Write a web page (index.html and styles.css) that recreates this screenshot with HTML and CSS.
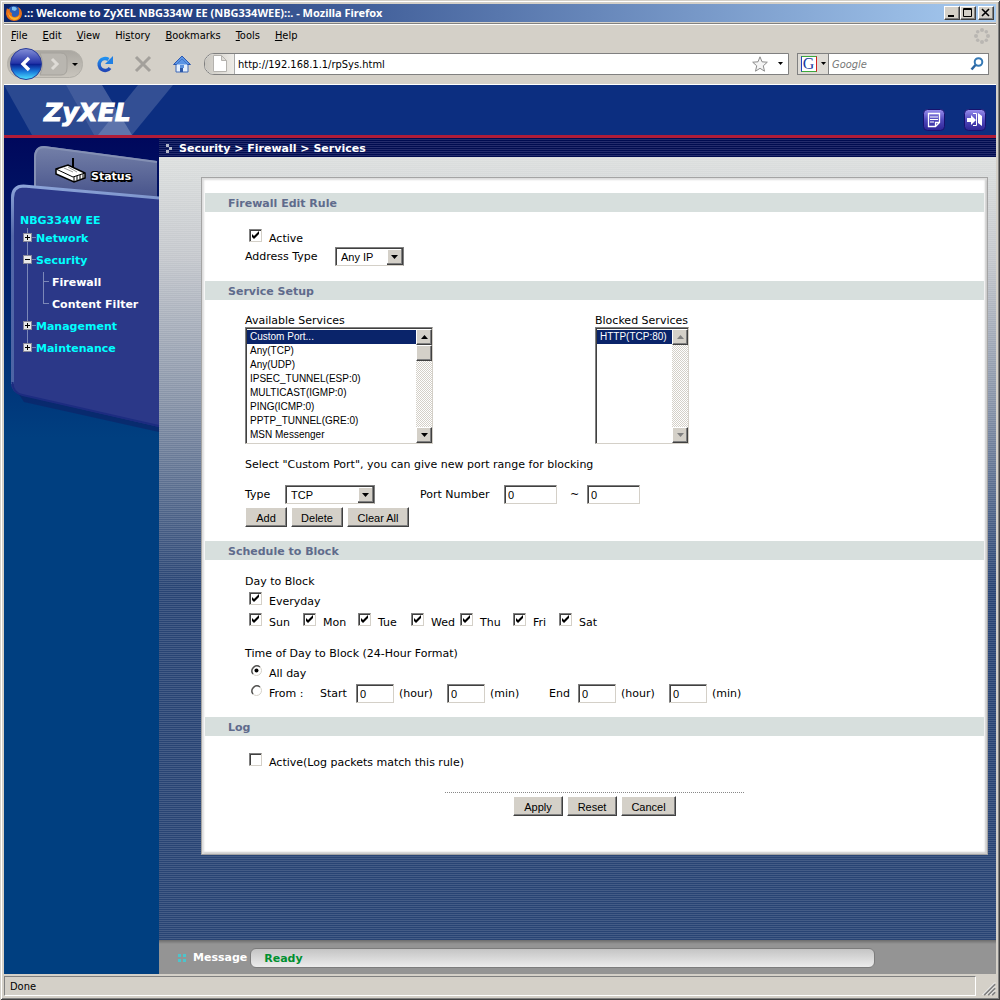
FILE: index.html
```
<!DOCTYPE html>
<html lang="en">
<head>
    <meta charset="UTF-8">
    <meta name="viewport" content="width=device-width, initial-scale=1.0">
    <title>.:: Welcome to ZyXEL NBG334W EE (NBG334WEE)::.</title>
    <link rel="stylesheet" href="styles.css">
</head>
<body>
    <div class="window">
        <div class="titlebar">
            <svg class="fox" width="17" height="17" viewBox="0 0 17 17">
                <circle cx="8" cy="8" r="7" fill="#2b5fb8"/>
                <path d="M6 2q4-1 5 2l-2 2-3-1z" fill="#7fc0ee"/>
                <path d="M1 3q1 2 3 1-1 3 2 4-1 3 2 4 4 0 5-3 1-4-1-7 4 2 4 7-1 7-8 7-7-1-8-7 0-3 1-6z" fill="#e8701a"/>
                <path d="M2 5q0 5 4 7 5 2 8-2-1 5-6 5-6-1-6-10z" fill="#f9b52c"/>
            </svg>
            <span class="title-text">.:: Welcome to ZyXEL NBG334W EE (NBG334WEE)::. - Mozilla Firefox</span>
            <button class="win-btn" aria-label="Minimize"><svg width="12" height="10" viewBox="0 0 12 10"><path d="M2 8h6" stroke="#000" stroke-width="2"/></svg></button>
            <button class="win-btn" aria-label="Maximize"><svg width="12" height="10" viewBox="0 0 12 10"><path d="M1.500 .5h8v8h-8zM1.500 1.500h8" fill="none" stroke="#000"/></svg></button>
            <button class="win-btn close" aria-label="Close"><svg width="12" height="10" viewBox="0 0 12 10"><path d="M2 1l7 7M9 1l-7 7" stroke="#000" stroke-width="1.600"/></svg></button>
        </div>

        <div class="menubar">
            <a href="#"><u>F</u>ile</a>
            <a href="#"><u>E</u>dit</a>
            <a href="#"><u>V</u>iew</a>
            <a href="#">Hi<u>s</u>tory</a>
            <a href="#"><u>B</u>ookmarks</a>
            <a href="#"><u>T</u>ools</a>
            <a href="#"><u>H</u>elp</a>
            <svg class="throbber" width="16" height="16" viewBox="0 0 16 16" fill="#b9b6b2">
                <circle cx="8" cy="2" r="2"/><circle cx="12.300" cy="3.700" r="1.800"/><circle cx="14" cy="8" r="2"/><circle cx="12.300" cy="12.300" r="1.800"/>
                <circle cx="8" cy="14" r="2"/><circle cx="3.700" cy="12.300" r="1.800"/><circle cx="2" cy="8" r="2"/><circle cx="3.700" cy="3.700" r="1.800"/>
            </svg>
        </div>

        <div class="toolbar">
            <button class="tool" aria-label="Back and forward">
                <svg width="78" height="34" viewBox="0 0 78 34">
                    <defs>
                        <linearGradient id="pill" x2="0" y2="1"><stop offset="0" stop-color="#aaa7a1"/><stop offset="1" stop-color="#c9c5bd"/></linearGradient>
                        <linearGradient id="back" x2="0" y2="1"><stop offset="0" stop-color="#8590d8"/><stop offset=".48" stop-color="#2433a8"/><stop offset=".5" stop-color="#0a1c90"/><stop offset=".75" stop-color="#1a7cdc"/><stop offset="1" stop-color="#50e4ff"/></linearGradient>
                    </defs>
                    <rect x="1.500" y="3.500" width="75" height="27" rx="13" fill="url(#pill)" stroke="#b2afa8"/>
                    <path d="M34 6h21q6 0 6 7v8q0 7-6 7H34q5-11 0-22z" fill="#b9b6b0" stroke="#a5a29c"/>
                    <path d="M46 12l5 5-5 5" fill="none" stroke="#dedbd6" stroke-width="3"/>
                    <circle cx="20" cy="17" r="15.500" fill="url(#back)" stroke="#2a3c98"/>
                    <path d="M23 11l-6 6 6 6" fill="none" stroke="#fff" stroke-width="3.400"/>
                    <path d="M66 16h6l-3 3z" fill="#000"/>
                </svg>
            </button>
            <button class="tool" aria-label="Reload">
                <svg width="18" height="18" viewBox="0 0 18 18">
                    <defs><linearGradient id="reload" x2="0" y2="1"><stop offset="0" stop-color="#2090f0"/><stop offset="1" stop-color="#2048b8"/></linearGradient></defs>
                    <path d="M14 13A6 6 0 1 1 12.500 4.500" fill="none" stroke="url(#reload)" stroke-width="3.400"/>
                    <path d="M17 1v8H9z" fill="#2080e4"/>
                </svg>
            </button>
            <button class="tool" aria-label="Stop">
                <svg width="18" height="18" viewBox="0 0 18 18"><path d="M2 2l14 14M16 2L2 16" stroke="#a3a09b" stroke-width="3"/></svg>
            </button>
            <button class="tool" aria-label="Home">
                <svg width="20" height="18" viewBox="0 0 20 18">
                    <path d="M4 9l6-6 6 6v8H4z" fill="#e4eefb" stroke="#3c68b8"/>
                    <path d="M10 1l8.500 8.500h-3L10 4 4.500 9.500h-3z" fill="#5a94e4" stroke="#2c58b0"/>
                    <path d="M4.500 9.500L10 4l5.500 5.500z" fill="#5a94e4"/>
                    <path d="M8 10h4v3H8z" fill="#5a90dc"/><path d="M8 13h3v4H8z" fill="#2c58a8"/>
                </svg>
            </button>
            <div class="urlbar">
                <span class="page-icon"><svg width="14" height="17" viewBox="0 0 14 17"><path d="M.5 .5h8l5 5v11H.5zM8.500 .5v5h5" fill="#fff" stroke="#b4b2ae"/></svg></span>
                <input type="text" value="http://192.168.1.1/rpSys.html" aria-label="Address">
                <svg width="16" height="16" viewBox="0 0 16 16"><path d="M8 .8l2 5 5.300.4-4 3.600 1.200 5.400L8 12.300l-4.500 2.900 1.200-5.400-4-3.600L6 5.800z" fill="#f4f4f4" stroke="#8c8c8c"/></svg>
                <svg class="drop" width="5" height="3" viewBox="0 0 5 3"><path d="M0 0h5L2.500 3z"/></svg>
            </div>
            <div class="searchbar">
                <span class="engine">
                    <span class="g-logo">G</span>
                    <svg width="5" height="3" viewBox="0 0 5 3"><path d="M0 0h5L2.500 3z"/></svg>
                </span>
                <input type="text" placeholder="Google" aria-label="Search">
                <svg width="14" height="14" viewBox="0 0 14 14"><circle cx="8.500" cy="5" r="3.800" fill="none" stroke="#3578b4" stroke-width="2"/><path d="M5.500 8L1.500 12.500" stroke="#2a64a0" stroke-width="2.500"/></svg>
            </div>
        </div>

        <div class="page">
            <div class="header">
                <svg class="header-art" width="180" height="50" viewBox="0 0 180 50" fill="#fff">
                    <path d="M0 0h62l28 50H28z" opacity=".13"/>
                    <path d="M62 0h36l30 50H90z" opacity=".22"/>
                    <path d="M134 0h35l-41 50H94z" opacity=".16"/>
                </svg>
                <a class="logo" href="#">ZyXEL</a>
                <a class="head-icon" href="#" aria-label="Wizard">
                    <svg width="22" height="22" viewBox="0 0 22 22">
                        <rect x=".5" y=".5" width="21" height="21" rx="4" fill="url(#violet)" stroke="#17126e"/>
                        <path d="M5.500 4.500h11v9l-4 4h-7zM12.500 17v-3.500h4" fill="none" stroke="#fff" stroke-width="1.300"/>
                        <path d="M7 8h8M7 10.500h8M7 13h4" stroke="#fff"/>
                    </svg>
                </a>
                <a class="head-icon" href="#" aria-label="Logout">
                    <svg width="22" height="22" viewBox="0 0 22 22">
                        <defs><linearGradient id="violet" x2="0" y2="1"><stop offset="0" stop-color="#9a90ee"/><stop offset=".5" stop-color="#5048bc"/><stop offset="1" stop-color="#2c2494"/></linearGradient></defs>
                        <rect x=".5" y=".5" width="21" height="21" rx="4" fill="url(#violet)" stroke="#17126e"/>
                        <path d="M3 9h4V6l5 5-5 5v-3H3zM14 4l4 3v10l-4-3z" fill="#fff"/>
                        <path d="M9 4.500h3.500v12H9" fill="none" stroke="#fff"/>
                    </svg>
                </a>
            </div>

            <div class="columns">
                <div class="sidebar">
                    <svg class="sidebar-art" width="155" height="300" viewBox="0 0 155 300">
                        <defs>
                            <linearGradient id="tab" x2="0" y2="1"><stop offset="0" stop-color="#7480a8"/><stop offset="1" stop-color="#3c4884"/></linearGradient>
                            <linearGradient id="edge" x2="0" y2="1"><stop offset="0" stop-color="#8ca4d8"/><stop offset=".25" stop-color="#5468a8"/><stop offset="1" stop-color="#4c64a4"/></linearGradient>
                        </defs>
                        <path d="M30 60V20q0-12 10-12l113 15v50z" fill="url(#tab)"/>
                        <path d="M31 48V20q0-11 9-11l113 15" fill="none" stroke="#8490b4" stroke-width="2"/>
                        <path d="M12 252l8 12 135 30v-8z" fill="#0c2468" opacity=".7"/>
                        <path d="M7 60q0-13 12-13l136 13v229L17 257q-10-3-10-12z" fill="#2b3888"/>
                        <path d="M8.500 246V60q0-12 11-12L155 60" fill="none" stroke="url(#edge)" stroke-width="3"/>
                        <path d="M8.500 244q0 11 10 13L155 288" fill="none" stroke="#1c2c80" stroke-width="2"/>
                    </svg>
                    <a class="status-tab" href="#">
                        <svg width="34" height="26" viewBox="0 0 34 26">
                            <path d="M2 12l12-4 17 8v5l-11 4L2 17z" fill="#fff" stroke="#000" stroke-width="1.500"/>
                            <path d="M2 12l17 8 12-4M20 20v4M23 19v4M26 18v4M29 17v4" fill="none" stroke="#000"/>
                            <path d="M10 11l9 4M14 10l9 5" stroke="#999"/>
                            <path d="M19 10V1" stroke="#000" stroke-width="2"/>
                        </svg>
                        <span>Status</span>
                    </a>
                    <div class="tree">
                        <a class="root" href="#">NBG334W EE</a>
                        <ul>
                            <li><a class="node plus" href="#">Network</a></li>
                            <li>
                                <a class="node minus" href="#">Security</a>
                                <ul class="sub">
                                    <li><a href="#">Firewall</a></li>
                                    <li><a href="#">Content Filter</a></li>
                                </ul>
                            </li>
                            <li><a class="node plus" href="#">Management</a></li>
                            <li><a class="node plus" href="#">Maintenance</a></li>
                        </ul>
                    </div>
                </div>

                <div class="main">
                    <div class="crumbs">
                        <svg width="8" height="10" viewBox="0 0 8 10" fill="#b4b8c8"><path d="M1 0h3v3H1zM4 3h3v3H4zM1 6h3v3H1z"/></svg>
                        <span>Security &gt; Firewall &gt; Services</span>
                    </div>

                    <div class="workspace">
                        <form class="panel">
                            <h2>Firewall Edit Rule</h2>
                            <div class="section rule">
                                <label class="check"><input type="checkbox" checked> <span>Active</span></label>
                                <div class="row">
                                    <label class="address-label" for="address_type">Address Type</label>
                                    <select id="address_type" class="combo address"><option>Any IP</option></select>
                                </div>
                            </div>

                            <h2>Service Setup</h2>
                            <div class="section services">
                                <div class="lists">
                                    <div>
                                        <label for="available">Available Services</label>
                                        <div class="listbox available">
                                            <select id="available" size="8">
                                                <option selected>Custom Port...</option>
                                                <option>Any(TCP)</option>
                                                <option>Any(UDP)</option>
                                                <option>IPSEC_TUNNEL(ESP:0)</option>
                                                <option>MULTICAST(IGMP:0)</option>
                                                <option>PING(ICMP:0)</option>
                                                <option>PPTP_TUNNEL(GRE:0)</option>
                                                <option>MSN Messenger</option>
                                            </select>
                                            <div class="scroll"><i class="up"></i><i class="thumb"></i><i class="down"></i></div>
                                        </div>
                                    </div>
                                    <div>
                                        <label for="blocked">Blocked Services</label>
                                        <div class="listbox blocked">
                                            <select id="blocked" size="8">
                                                <option selected>HTTP(TCP:80)</option>
                                            </select>
                                            <div class="scroll off"><i class="up"></i><i class="down"></i></div>
                                        </div>
                                    </div>
                                </div>
                                <p>Select "Custom Port", you can give new port range for blocking</p>
                                <div class="row">
                                    <label class="type-label" for="type">Type</label>
                                    <select id="type" class="combo type"><option>TCP</option></select>
                                    <label class="port-label" for="port_from">Port Number</label>
                                    <input class="port" type="text" id="port_from" value="0">
                                    <span class="tilde">~</span>
                                    <input class="port" type="text" value="0" aria-label="Port Number end">
                                </div>
                                <div class="buttons">
                                    <button type="button" class="btn add">Add</button>
                                    <button type="button" class="btn delete">Delete</button>
                                    <button type="button" class="btn clear">Clear All</button>
                                </div>
                            </div>

                            <h2>Schedule to Block</h2>
                            <div class="section schedule">
                                <div class="line">Day to Block</div>
                                <label class="check"><input type="checkbox" checked> <span>Everyday</span></label>
                                <div class="days">
                                    <label class="check"><input type="checkbox" checked> <span>Sun</span></label>
                                    <label class="check"><input type="checkbox" checked> <span>Mon</span></label>
                                    <label class="check"><input type="checkbox" checked> <span>Tue</span></label>
                                    <label class="check"><input type="checkbox" checked> <span>Wed</span></label>
                                    <label class="check"><input type="checkbox" checked> <span>Thu</span></label>
                                    <label class="check"><input type="checkbox" checked> <span>Fri</span></label>
                                    <label class="check"><input type="checkbox" checked> <span>Sat</span></label>
                                </div>
                                <div class="line time-title">Time of Day to Block (24-Hour Format)</div>
                                <label class="check"><input type="radio" name="time" checked> <span>All day</span></label>
                                <div class="times">
                                    <label class="check"><input type="radio" name="time"> <span>From :</span></label>
                                    <label class="start" for="start_hour">Start</label>
                                    <input type="text" id="start_hour" value="0"><span>(hour)</span>
                                    <input type="text" value="0" aria-label="Start minute"><span>(min)</span>
                                    <label class="end" for="end_hour">End</label>
                                    <input type="text" id="end_hour" value="0"><span>(hour)</span>
                                    <input type="text" value="0" aria-label="End minute"><span>(min)</span>
                                </div>
                            </div>

                            <h2>Log</h2>
                            <div class="section log">
                                <label class="check"><input type="checkbox"> <span>Active(Log packets match this rule)</span></label>
                            </div>
                            <div class="actions">
                                <button type="button" class="btn">Apply</button>
                                <button type="reset" class="btn">Reset</button>
                                <button type="button" class="btn cancel">Cancel</button>
                            </div>
                        </form>
                    </div>

                    <div class="message">
                        <svg width="8" height="8" viewBox="0 0 8 8" fill="#4cc4cc"><path d="M0 0h3v3H0zM5 0h3v3H5zM0 5h3v3H0zM5 5h3v3H5z"/></svg>
                        <span>Message</span>
                        <div class="message-field">Ready</div>
                    </div>
                </div>
            </div>
        </div>

        <div class="statusbar">
            <span>Done</span>
            <svg width="14" height="14" viewBox="0 0 14 14"><path d="M2 13L13 2M6 13l7-7M10 13l3-3" stroke="#808080" stroke-width="2"/><path d="M0.500 13L13 .5M4.500 13L13 4.500M8.500 13L13 8.500" stroke="#fff"/></svg>
        </div>
    </div>
</body>
</html>
```
FILE: styles.css
```
* {
    box-sizing: border-box;
}
body {
    margin: 0;
    background: #d4d0c8;
    font-family: "DejaVu Sans", Verdana, sans-serif;
    font-size: 11px;
    line-height: 14px;
    color: #000;
}
a {
    color: inherit;
    text-decoration: none;
}
input, select, button {
    margin: 0;
    font-family: "Liberation Sans", Arial, sans-serif;
    font-size: 11px;
    color: #000;
}
svg {
    display: block;
    flex: none;
}
.window {
    display: flex;
    flex-direction: column;
    min-height: 100vh;
    padding: 4px 4px 2px;
    box-shadow: inset 1px 1px #d4d0c8, inset -1px -1px #404040, inset 2px 2px #fff, inset -2px -2px #808080;
}

/* browser chrome */
.titlebar {
    display: flex;
    align-items: center;
    height: 18px;
    padding: 0 2px;
    background: linear-gradient(90deg, #0a246a, #a6caf0);
    color: #fff;
    font-family: "Noto Sans", Tahoma, sans-serif;
    font-weight: bold;
}
.title-text {
    flex: 1;
    padding-left: 1px;
}
.win-btn {
    width: 16px;
    height: 14px;
    padding: 0 1px;
    background: #d4d0c8;
    border: 1px solid;
    border-color: #fff #404040 #404040 #fff;
    box-shadow: inset -1px -1px #808080;
}
.close {
    margin-left: 2px;
}
.menubar {
    display: flex;
    align-items: center;
    gap: 15px;
    height: 24px;
    margin-top: 1px;
    padding: 0 6px 0 7px;
    border-top: 1px solid #808080;
    box-shadow: inset 0 1px #fff;
    font-family: "DejaVu Sans Condensed", Tahoma, sans-serif;
}
.throbber {
    margin-left: auto;
}
.toolbar {
    display: flex;
    align-items: center;
    height: 38px;
    padding: 0 7px 4px 2px;
    border-bottom: 1px solid #fff;
}
.tool {
    padding: 0;
    border: 0;
    background: none;
}
.tool + .tool {
    margin-left: 12px;
}
.tool:nth-child(3), .tool:nth-child(4) {
    margin-left: 20px;
}
.urlbar {
    display: flex;
    flex: 1;
    align-items: center;
    height: 22px;
    margin-left: 12px;
    padding-right: 5px;
    background: #fff;
    border: 1px solid #808080;
    border-radius: 10px 0 0 10px;
}
.urlbar input, .searchbar input {
    flex: 1;
    min-width: 0;
    padding: 2px 3px 0;
    border: 0;
    background: none;
    font-family: "DejaVu Sans Condensed", Tahoma, sans-serif;
}
.page-icon {
    display: flex;
    justify-content: center;
    align-items: center;
    width: 30px;
    height: 20px;
    background: linear-gradient(90deg, #c8c5be, #eeece8);
    border-right: 1px solid #aaa;
    border-radius: 9px 0 0 9px;
}
.drop {
    margin-left: 10px;
}
.searchbar {
    display: flex;
    align-items: center;
    width: 192px;
    height: 22px;
    margin-left: 8px;
    padding-right: 4px;
    background: #fff;
    border: 1px solid #808080;
}
.searchbar input::placeholder {
    color: #777;
    font-style: italic;
}
.engine {
    display: flex;
    align-items: center;
    justify-content: center;
    gap: 4px;
    width: 31px;
    height: 20px;
    background: #dedbd5;
    border-right: 1px solid #808080;
}
.g-logo {
    width: 16px;
    height: 16px;
    background: #fff;
    border: 1px solid;
    border-color: #3ca83c #d42020 #3ca83c #2440c0;
    color: #1c3ca0;
    font: 16px/14px "Liberation Serif", serif;
    text-align: center;
}
.statusbar {
    display: flex;
    align-items: flex-end;
    justify-content: space-between;
    height: 24px;
    padding: 2px 0;
}
.statusbar span {
    flex: 1;
    height: 20px;
    margin-right: 6px;
    padding: 3px 5px;
    border: 1px solid;
    border-color: #808080 #fff #fff #808080;
    font-family: "DejaVu Sans Condensed", Tahoma, sans-serif;
}

/* router page */
.page {
    display: flex;
    flex: 1;
    flex-direction: column;
}
.header {
    position: relative;
    display: flex;
    align-items: flex-end;
    gap: 19px;
    height: 53px;
    padding: 0 10px 4px 40px;
    background: #0c2e80;
    border-bottom: 3px solid #b01c38;
}
.header-art {
    position: absolute;
    top: 0;
    left: 0;
}
.logo {
    position: relative;
    margin-right: auto;
    padding-bottom: 3px;
    color: #fff;
    font-size: 25px;
    font-weight: bold;
    font-style: italic;
    line-height: 30px;
    -webkit-text-stroke: 1px #fff;
}
.columns {
    display: flex;
    flex: 1;
}
.sidebar {
    position: relative;
    width: 155px;
    background: linear-gradient(#00085c, #003f80 300px);
    color: #0ff;
    font-weight: bold;
}
.sidebar-art {
    position: absolute;
    top: 0;
    left: 0;
}
.status-tab {
    position: relative;
    display: flex;
    align-items: flex-end;
    gap: 3px;
    padding: 19px 0 0 50px;
    color: #fff;
    text-shadow: 1px 1px #000, -1px -1px #000, 1px -1px #000, -1px 1px #000, 2px 2px #000;
}
.status-tab span {
    padding-top: 1px;
    line-height: 12px;
}
.tree {
    position: relative;
    padding: 31px 0 0 16px;
}
.tree ul {
    margin: 0;
    padding: 0;
    list-style: none;
}
.root {
    display: block;
}
.tree > ul {
    background: linear-gradient(#7c88b8, #7c88b8) 7px 0 / 1px 118px no-repeat;
}
.node {
    display: block;
    padding: 4px 0 4px 16px;
}
.plus {
    background: url("data:image/svg+xml,%3Csvg xmlns='http://www.w3.org/2000/svg' width='13' height='9'%3E%3Crect x='.5' y='.5' width='8' height='8' fill='%23e8e8e8' stroke='%23889'/%3E%3Cpath d='M2 4.500h5M4.500 2v5' stroke='%23000'/%3E%3Cpath d='M9 4.500h4' stroke='%237c88b8'/%3E%3C/svg%3E") 3px 5px no-repeat;
}
.minus {
    background: url("data:image/svg+xml,%3Csvg xmlns='http://www.w3.org/2000/svg' width='13' height='9'%3E%3Crect x='.5' y='.5' width='8' height='8' fill='%23e8e8e8' stroke='%23889'/%3E%3Cpath d='M2 4.500h5' stroke='%23000'/%3E%3Cpath d='M9 4.500h4' stroke='%237c88b8'/%3E%3C/svg%3E") 3px 5px no-repeat;
}
.tree .sub {
    padding-left: 23px;
    color: #fff;
    background: linear-gradient(#7c88b8, #7c88b8) 23px 0 / 1px 32px no-repeat;
}
.sub a {
    display: block;
    padding: 4px 0 4px 9px;
    background: linear-gradient(#7c88b8, #7c88b8) 0 9px / 6px 1px no-repeat;
}
.main {
    display: flex;
    flex: 1;
    flex-direction: column;
    min-width: 0;
}
.crumbs {
    display: flex;
    align-items: center;
    gap: 6px;
    height: 19px;
    padding: 2px 0 0 6px;
    background: repeating-linear-gradient(#000c50 0 1px, #242c6c 1px 2px);
    color: #fff;
    font-weight: bold;
}
.workspace {
    flex: 1;
    padding: 20px 8px 84px 42px;
    background:
        repeating-linear-gradient(rgba(255, 255, 255, 0) 0 1px, rgba(255, 255, 255, 0.13) 1px 2px),
        linear-gradient(#dcdfde, #c4c7cc 100px, #8894a8 240px, #284474 430px);
}
.panel {
    min-height: 678px;
    padding: 15px 3px 38px;
    background: #fff;
    border: 1px solid #a4a4a4;
    box-shadow: inset 2px 2px 2px #ddd, inset -2px -2px 2px #ccc;
}
.panel h2 {
    margin: 0;
    padding: 4px 23px 1px;
    background: #d7dfdd;
    color: #5f6b8c;
    font-size: 11px;
    line-height: 14px;
}
.section {
    padding-left: 40px;
}
.row {
    display: flex;
    align-items: center;
    height: 20px;
}
.row label, .row .tilde {
    padding-top: 2px;
}
.check {
    display: flex;
    align-items: flex-end;
    gap: 7px;
    padding-left: 4px;
}
.check input {
    appearance: none;
    width: 13px;
    height: 13px;
    margin-bottom: 4px;
    background: #fff;
}
.check input[type="checkbox"] {
    border: 1px solid;
    border-color: #808080 #d4d0c8 #d4d0c8 #808080;
    box-shadow: inset 1px 1px #404040;
}
.check input[type="checkbox"]:checked {
    background: #fff url("data:image/svg+xml,%3Csvg xmlns='http://www.w3.org/2000/svg' width='11' height='11'%3E%3Cpath d='M2 4v3l2 2 5-5V1L4 6z'/%3E%3C/svg%3E") no-repeat;
}
.check input[type="radio"] {
    background: url("data:image/svg+xml,%3Csvg xmlns='http://www.w3.org/2000/svg' width='13' height='13'%3E%3Ccircle cx='7.500' cy='6.500' r='5' fill='%23fff' stroke='%23d4d0c8'/%3E%3Cpath d='M4 10a5 5 0 0 1 7-7' fill='none' stroke='%23505050' stroke-width='1.400'/%3E%3C/svg%3E");
}
.check input[type="radio"]:checked {
    background: url("data:image/svg+xml,%3Csvg xmlns='http://www.w3.org/2000/svg' width='13' height='13'%3E%3Ccircle cx='7.500' cy='6.500' r='5' fill='%23fff' stroke='%23d4d0c8'/%3E%3Cpath d='M4 10a5 5 0 0 1 7-7' fill='none' stroke='%23505050' stroke-width='1.400'/%3E%3Ccircle cx='7.500' cy='6.500' r='2'/%3E%3C/svg%3E");
}
.combo, .row input, .times input[type="text"] {
    height: 19px;
    padding: 2px 3px 0;
    background-color: #fff;
    border: 1px solid;
    border-color: #808080 #d4d0c8 #d4d0c8 #808080;
    border-radius: 0;
    box-shadow: inset 1px 1px #404040;
}
.combo {
    appearance: none;
    padding: 2px 5px 0;
    border-right-color: #808080;
    background: #fff url("data:image/svg+xml,%3Csvg xmlns='http://www.w3.org/2000/svg' width='16' height='16'%3E%3Cpath d='M0 0h16v16H0z' fill='%23404040'/%3E%3Cpath d='M0 0h15v15H0z' fill='%23808080'/%3E%3Cpath d='M0 0h14v14H0z' fill='%23fff'/%3E%3Cpath d='M1 1h13v13H1z' fill='%23d4d0c8'/%3E%3Cpath d='M4 6h7l-3.500 4z'/%3E%3C/svg%3E") right 1px no-repeat;
}
.rule {
    padding-top: 17px;
    padding-bottom: 15px;
}
.rule .check {
    height: 17px;
}
.address-label {
    width: 90px;
}
.address {
    width: 69px;
}
.services {
    padding-top: 14px;
    padding-bottom: 14px;
}
.lists {
    display: flex;
    gap: 162px;
}
.lists label {
    display: block;
    line-height: 13px;
    white-space: nowrap;
}
.listbox {
    display: flex;
    height: 117px;
    border: 1px solid;
    border-color: #808080 #d4d0c8 #d4d0c8 #808080;
    box-shadow: inset 1px 1px #404040;
    padding: 1px 0 0 1px;
}
.available {
    width: 188px;
}
.blocked {
    width: 94px;
}
.listbox select {
    flex: 1;
    min-width: 0;
    height: 114px;
    padding: 1px 0 0;
    border: 0;
    border-radius: 0;
    outline: 0;
    background: #fff;
    font-size: 10px;
    overflow: hidden;
    scrollbar-width: none;
}
.listbox option {
    min-height: 14px;
    padding: 1px 3px 0;
    line-height: 13px;
}
.listbox option:checked {
    background: #0a246a linear-gradient(#0a246a, #0a246a);
    color: #fff;
}
.scroll {
    display: flex;
    flex-direction: column;
    width: 16px;
    background: repeating-conic-gradient(#d4d0c8 0 25%, #fff 0 50%) 0 0 / 2px 2px;
}
.scroll i {
    height: 16px;
    background: #d4d0c8 center no-repeat;
    border: 1px solid;
    border-color: #fff #404040 #404040 #fff;
    box-shadow: inset -1px -1px #808080;
}
.scroll .up {
    background-image: url("data:image/svg+xml,%3Csvg xmlns='http://www.w3.org/2000/svg' width='7' height='4'%3E%3Cpath d='M0 4h7L3.500 0z'/%3E%3C/svg%3E");
}
.scroll .down {
    margin-top: auto;
    background-image: url("data:image/svg+xml,%3Csvg xmlns='http://www.w3.org/2000/svg' width='7' height='4'%3E%3Cpath d='M0 0h7L3.500 4z'/%3E%3C/svg%3E");
}
.off .up {
    background-image: url("data:image/svg+xml,%3Csvg xmlns='http://www.w3.org/2000/svg' width='7' height='4'%3E%3Cpath d='M0 4h7L3.500 0z' fill='%23808080'/%3E%3C/svg%3E");
}
.off .down {
    background-image: url("data:image/svg+xml,%3Csvg xmlns='http://www.w3.org/2000/svg' width='7' height='4'%3E%3Cpath d='M0 0h7L3.500 4z' fill='%23808080'/%3E%3C/svg%3E");
}
.services p {
    margin: 14px 0 12px;
}
.type-label {
    width: 40px;
}
.type {
    width: 90px;
}
.port-label {
    width: 84px;
    margin-left: 45px;
}
.port {
    width: 53px;
}
.tilde {
    width: 30px;
    padding-left: 13px;
}
.buttons {
    display: flex;
    gap: 4px;
    margin-top: 3px;
}
.btn {
    width: 50px;
    height: 20px;
    padding: 1px 0 0;
    background: #d4d0c8;
    border: 1px solid;
    border-color: #fff #404040 #404040 #fff;
    box-shadow: inset -1px -1px #808080;
}
.add {
    width: 42px;
}
.delete {
    width: 52px;
}
.clear {
    width: 62px;
}
.cancel {
    width: 55px;
}
.schedule {
    padding-top: 15px;
    padding-bottom: 13px;
}
.schedule .check {
    height: 20px;
}
.days {
    display: grid;
    grid-template-columns: 54px 55px 53px 49px 53px 46px auto;
    height: 21px;
    align-items: end;
}
.time-title {
    margin-top: 17px;
}
.times {
    display: flex;
    align-items: center;
    height: 22px;
    margin-top: 1px;
}
.times .check {
    width: 75px;
    height: 16px;
}
.times .start {
    width: 36px;
    padding-top: 1px;
}
.times .end {
    width: 29px;
    margin-left: 11px;
    padding-top: 1px;
}
.times input[type="text"] {
    width: 38px;
    margin-right: 5px;
}
.times > span {
    width: 48px;
    padding-top: 1px;
}
.log {
    padding-top: 17px;
    padding-bottom: 22px;
}
.actions {
    display: flex;
    justify-content: center;
    gap: 4px;
    width: 299px;
    margin: 0 auto;
    padding-top: 3px;
    border-top: 1px dotted #888;
}
.message {
    display: flex;
    align-items: center;
    height: 34px;
    padding: 1px 121px 0 19px;
    background: linear-gradient(#6c6c6c, #949494 4px);
    color: #fff;
    font-weight: bold;
}
.message svg {
    margin-right: 7px;
}
.message-field {
    flex: 1;
    height: 20px;
    margin-left: 3px;
    padding: 3px 13px;
    background: linear-gradient(#c4c4c4, #ececec);
    border: 1px solid #7c7c7c;
    border-radius: 6px;
    color: #009030;
}
```
